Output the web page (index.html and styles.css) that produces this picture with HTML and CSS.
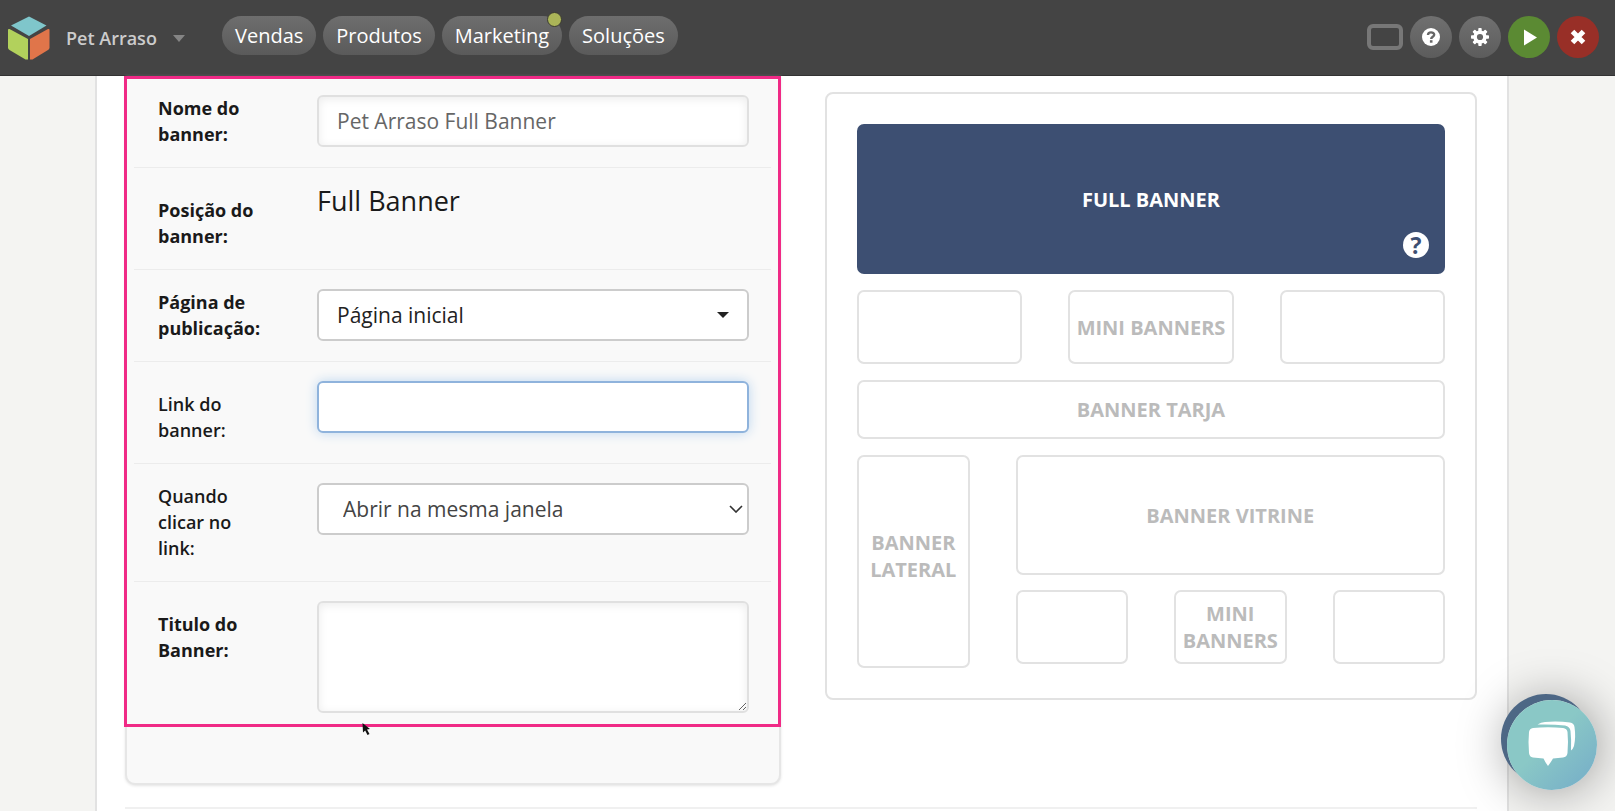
FILE: index.html
```html
<!DOCTYPE html>
<html lang="pt-BR">
<head>
<meta charset="utf-8">
<title>Pet Arraso - Banners</title>
<link rel="stylesheet" href="styles.css">
</head>
<body>
<header class="topbar">
  <a class="brand" href="#">
    <svg class="logo" viewBox="0 0 42 44" aria-hidden="true">
      <path d="M21 0.500L38.500 9.500L21 20L3 9.500Z" fill="#7fc6cb"/>
      <path d="M1.500 13L20 23V43.500H17.500L1.500 34Q0 33 0 31.500V14Q0 12.500 1.500 13Z" fill="#b2d15c"/>
      <path d="M40 13L22 23V43.500H24.500L40 34Q41.500 33 41.500 31.500V14Q41.500 12.500 40 13Z" fill="#e0754a"/>
    </svg>
    <span>Pet Arraso</span>
    <svg class="brand-caret" viewBox="0 0 12 7" aria-hidden="true"><path d="M0 0H12L6 7Z" fill="#858585"/></svg>
  </a>
  <nav class="menu">
    <a class="pill" href="#">Vendas</a>
    <a class="pill" href="#">Produtos</a>
    <a class="pill" href="#">Marketing<span class="dot"></span></a>
    <a class="pill" href="#">Soluções</a>
  </nav>
  <div class="tools">
    <button class="screen" type="button" aria-label="Tela"></button>
    <button class="round" type="button" aria-label="Ajuda">
      <svg viewBox="0 0 18 18" width="18" height="18"><circle cx="9" cy="9" r="9" fill="#fff"/><path d="M6 7C6 3.400 12.200 3.600 12.200 6.700C12.200 8.800 9.200 8.700 9.200 11" fill="none" stroke="#666" stroke-width="2.400"/><rect x="7.900" y="12.200" width="2.600" height="2.500" fill="#666"/></svg>
    </button>
    <button class="round" type="button" aria-label="Configurações">
      <svg viewBox="0 0 18 18" width="18" height="18"><g fill="#fff"><g id="teeth"><rect x="7.300" y="0" width="3.400" height="18" rx="0.800"/><rect x="0" y="7.300" width="18" height="3.400" rx="0.800"/></g><use href="#teeth" transform="rotate(45 9 9)"/><circle cx="9" cy="9" r="6.600"/></g><circle cx="9" cy="9" r="3.100" fill="#666"/></svg>
    </button>
    <button class="round go" type="button" aria-label="Ver loja">
      <svg viewBox="0 0 18 18" width="18" height="18"><path d="M4 1.500L17 9.500L4 17.500Z" fill="#fff"/></svg>
    </button>
    <button class="round quit" type="button" aria-label="Sair">
      <svg viewBox="0 0 18 18" width="18" height="18"><path d="M3.500 3.500L14.500 14.500M14.500 3.500L3.500 14.500" stroke="#fff" stroke-width="5"/></svg>
    </button>
  </div>
</header>

<main class="page">
  <div class="columns">
    <form class="panel">
      <div class="fields">
        <div class="row">
          <label for="nome">Nome do banner:</label>
          <input class="control inset" id="nome" type="text" value="Pet Arraso Full Banner">
        </div>
        <div class="row">
          <span class="label low">Posição do banner:</span>
          <output class="value">Full Banner</output>
        </div>
        <div class="row">
          <label for="pagina">Página de publicação:</label>
          <div class="select">
            <select class="control dark" id="pagina"><option>Página inicial</option></select>
            <svg class="arrow solid" viewBox="0 0 12 6" aria-hidden="true"><path d="M0 0H12L6 6Z" fill="#222"/></svg>
          </div>
        </div>
        <div class="row">
          <label class="low medium" for="link">Link do banner:</label>
          <input class="control active" id="link" type="text">
        </div>
        <div class="row">
          <label class="medium" for="clicar">Quando clicar no link:</label>
          <div class="select">
            <select class="control wide" id="clicar"><option>Abrir na mesma janela</option></select>
            <svg class="arrow" viewBox="0 0 14 8" aria-hidden="true"><path d="M1 1L7 7L13 1" fill="none" stroke="#333" stroke-width="1.600"/></svg>
          </div>
        </div>
        <div class="row">
          <label class="low" for="titulo">Titulo do Banner:</label>
          <textarea class="control inset area" id="titulo"></textarea>
        </div>
        <svg class="pointer" viewBox="0 0 9 12" aria-hidden="true"><path d="M0.500 0L8 6L5 6.500L7.500 11L5.500 12L3.200 7.500L1 9.500Z" fill="#111"/></svg>
      </div>
    </form>

    <section class="preview">
      <div class="slot full">FULL BANNER
        <button class="hint" type="button" aria-label="Ajuda sobre o Full Banner">?</button>
      </div>
      <div class="minis">
        <div class="slot"></div>
        <div class="slot">MINI BANNERS</div>
        <div class="slot"></div>
      </div>
      <div class="slot strip">BANNER TARJA</div>
      <div class="lower">
        <div class="slot side">BANNER LATERAL</div>
        <div class="stack">
          <div class="slot showcase">BANNER VITRINE</div>
          <div class="minis">
            <div class="slot"></div>
            <div class="slot">MINI BANNERS</div>
            <div class="slot"></div>
          </div>
        </div>
      </div>
    </section>
  </div>
  <hr class="rule">
</main>

<button class="chat" type="button" aria-label="Abrir chat">
  <svg viewBox="0 0 48 46" aria-hidden="true"><path d="M5 7Q20 5.500 35 7Q39 7.500 39.500 11Q40.500 21 39.500 32Q39 36 35 36.500L25 37.500Q23 41 20 45Q17 41 15.500 37.500L5 36.500Q1.500 36 1 32Q0 21 1 11Q1.500 7.500 5 7Z" fill="#fff"/><path d="M9.500 3.500Q13 1 17 1Q30 0 42 1.500Q46 2 46.500 6Q48 16 46 25Q45 28 43 29.500Q43.500 19 42.500 10Q42 5.500 37 4.500Q24 3 9.500 3.500Z" fill="#fff"/></svg>
</button>
</body>
</html>
```

FILE: styles.css
```css
* {
  box-sizing: border-box;
}

body {
  display: flex;
  flex-direction: column;
  height: 100vh;
  margin: 0;
  overflow: hidden;
  background: #f4f4f2;
  color: #1a1a1a;
  font-family: "Open Sans", "Noto Sans", sans-serif;
}

button,
input,
select,
textarea {
  font-family: inherit;
}

.topbar {
  display: flex;
  flex: none;
  align-items: flex-start;
  height: 76px;
  padding: 16px 16px 0 8px;
  background: #444;
  border-bottom: 1px solid #333;
}

.brand {
  display: flex;
  align-items: center;
  width: 214px;
  color: #ccc;
  font-size: 18px;
  font-weight: 600;
  line-height: 44px;
  text-decoration: none;
}

.logo {
  width: 42px;
  height: 44px;
  margin-right: 16px;
}

.brand-caret {
  width: 12px;
  height: 7px;
  margin-left: 16px;
}

.menu {
  display: flex;
  gap: 7px;
}

.pill {
  position: relative;
  padding: 0 13px;
  border-radius: 20px;
  background: linear-gradient(#6e6e6e, #5a5a5a);
  color: #fff;
  font-size: 20px;
  font-weight: 500;
  line-height: 39px;
  text-decoration: none;
}

.dot {
  position: absolute;
  top: -4px;
  right: 0;
  width: 15px;
  height: 15px;
  border: 1px solid #3a3a30;
  border-radius: 50%;
  background: #abb558;
}

.tools {
  display: flex;
  align-items: center;
  gap: 7px;
  margin-left: auto;
}

.screen {
  width: 36px;
  height: 26px;
  padding: 0;
  border: 4px solid #777;
  border-radius: 6px;
  background: none;
}

.round {
  display: grid;
  place-items: center;
  width: 42px;
  height: 42px;
  padding: 0;
  border: 0;
  border-radius: 50%;
  background: linear-gradient(#707070, #5c5c5c);
}

.go {
  background: #5b8a33;
}

.quit {
  background: #982f27;
}

.page {
  flex: 1;
  margin: 0 106px 0 95px;
  padding: 0 30px 0 28px;
  border: solid #e2e2e2;
  border-width: 0 2px;
  background: #fff;
}

.columns {
  display: grid;
  grid-template-columns: 656fr 652fr;
  align-items: start;
  gap: 44px;
}

.panel {
  padding-bottom: 56px;
  border: solid #e6e6e6;
  border-width: 0 2px 2px;
  border-radius: 0 0 10px 10px;
  background: #f9f9f9;
  box-shadow: 0 1px 3px #e4e4e4;
}

.fields {
  position: relative;
  margin: 0 -2px 0 -3px;
  padding: 0 7px 8px;
  border: 3px solid #f02a86;
  border-top-width: 0;
}

.fields::before {
  content: "";
  position: absolute;
  inset: 0 0 auto;
  height: 3px;
  background: #f02a86;
}

.row {
  display: grid;
  grid-template-columns: 112px 1fr;
  align-items: start;
  gap: 47px;
  padding: 19px 22px 20px 24px;
  border-bottom: 1px solid #ececec;
}

.row:nth-of-type(6) {
  padding-bottom: 3px;
  border-bottom: 0;
}

.row label,
.label {
  font-size: 18px;
  font-weight: 700;
  line-height: 26px;
}

.row .medium {
  font-weight: 600;
}

.row .low {
  padding-top: 10px;
}

.value {
  font-size: 27px;
  line-height: 28px;
}

.control {
  display: block;
  width: 100%;
  height: 52px;
  margin: 0;
  padding: 0 18px;
  border: 2px solid #ccc;
  border-radius: 6px;
  outline: 0;
  appearance: none;
  background: #fff;
  color: #444;
  font-size: 21px;
}

.inset {
  border-color: #e0e0e0;
  box-shadow: inset 0 2px 10px #ececec;
  color: #666;
}

.dark {
  color: #222;
}

.wide {
  padding-left: 24px;
}

.active {
  border-color: #8fb3dc;
  box-shadow: 0 0 12px #bcd6ef;
}

.area {
  height: 112px;
  resize: vertical;
}

.select {
  position: relative;
}

.arrow {
  position: absolute;
  top: 22px;
  right: 6px;
  width: 14px;
  height: 8px;
  pointer-events: none;
}

.solid {
  top: 23px;
  right: 20px;
  width: 12px;
  height: 6px;
}

.pointer {
  position: absolute;
  bottom: -11px;
  left: 235px;
  width: 9px;
  height: 12px;
}

.preview {
  display: grid;
  gap: 16px;
  margin-top: 16px;
  padding: 30px;
  border: 2px solid #e2e2e2;
  border-radius: 8px;
}

.slot {
  display: grid;
  place-items: center;
  min-height: 74px;
  border: 2px solid #e2e2e2;
  border-radius: 7px;
  color: #bbb;
  font-size: 20px;
  font-weight: 700;
  line-height: 27px;
  text-align: center;
}

.full {
  position: relative;
  min-height: 150px;
  border: 0;
  background: #3d4f72;
  color: #fff;
}

.hint {
  position: absolute;
  right: 16px;
  bottom: 16px;
  width: 26px;
  height: 26px;
  padding: 0;
  border: 0;
  border-radius: 50%;
  background: #fff;
  color: #3d4f72;
  font-size: 23px;
  font-weight: 700;
  line-height: 26px;
}

.minis {
  display: grid;
  grid-template-columns: repeat(3, 1fr);
  gap: 46px;
}

.strip {
  min-height: 59px;
}

.lower {
  display: grid;
  grid-template-columns: 113fr 431fr;
  align-items: start;
  gap: 46px;
}

.side {
  min-height: 213px;
  padding-bottom: 12px;
}

.stack {
  display: grid;
  gap: 15px;
}

.showcase {
  min-height: 120px;
}

.rule {
  margin: 22px 0 0;
  border: 0;
  border-top: 2px solid #f0f0f0;
}

.chat {
  position: fixed;
  right: 18px;
  bottom: 21px;
  display: grid;
  place-items: center;
  width: 90px;
  height: 90px;
  padding: 0 0 3px;
  border: 0;
  border-radius: 50%;
  background: linear-gradient(135deg, #8ac8c6 45%, #76aec8 95%);
  box-shadow: -6px -6px 0 #4d6785, 0 0 50px rgba(0, 0, 0, 0.4);
}

.chat svg {
  width: 48px;
  height: 46px;
}
```
